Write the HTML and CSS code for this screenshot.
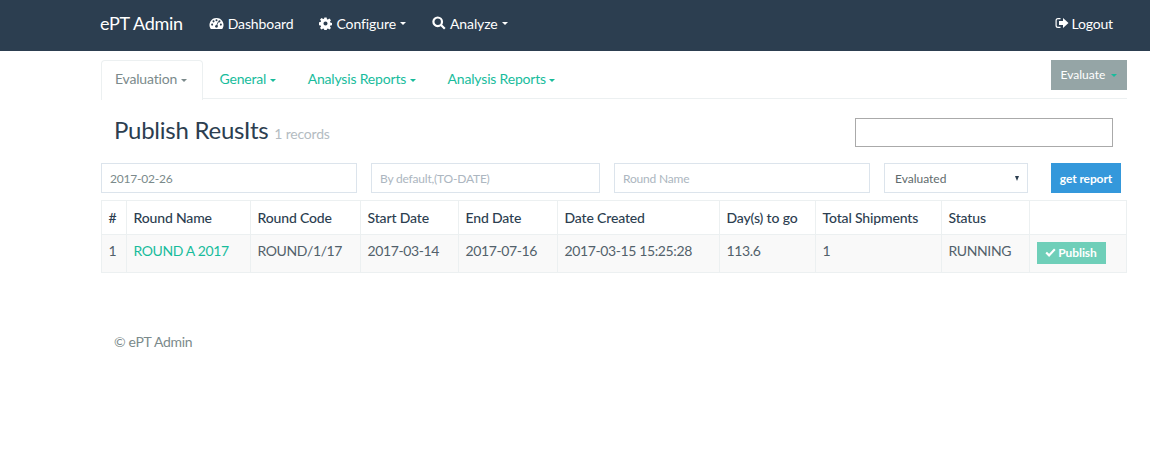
FILE: index.html
```html
<!DOCTYPE html>
<html lang="en">
<head>
    <meta charset="UTF-8">
    <meta name="viewport" content="width=device-width, initial-scale=1.0">
    <title>Publish Results</title>
    <link rel="stylesheet" href="styles.css">
</head>
<body>

    <!-- Top navigation -->
    <nav class="navbar">
        <a class="brand">ePT Admin</a>
        <a class="nav-link">
            <svg class="icon" viewBox="0 0 16 14" width="15" height="13"><path fill="currentColor" fill-rule="evenodd" d="M8 1a7.5 7.5 0 0 0-6.5 11.3c.2.4.5.6.9.6h11.2c.4 0 .7-.2.9-.6A7.500 7.500 0 0 0 8 1zM3.300 9.300a1.100 1.100 0 1 1 0-2.200 1.100 1.100 0 0 1 0 2.200zm1.500-3.500a1.100 1.100 0 1 1 0-2.200 1.100 1.100 0 0 1 0 2.200zM8 4.700a1.100 1.100 0 1 1 0-2.200 1.100 1.100 0 0 1 0 2.200zm1.300 6a1.500 1.500 0 0 1-2.800-1c.2-.6.800-1 1.400-1l1.600-3.700c.1-.3.400-.4.700-.3.300.1.400.4.300.7L8.900 8.100c.5.600.7 1.800.4 2.600zm1.900-4.900a1.100 1.100 0 1 1 0-2.200 1.100 1.100 0 0 1 0 2.200zm1.500 3.500a1.100 1.100 0 1 1 0-2.200 1.100 1.100 0 0 1 0 2.200z"/></svg>
            Dashboard
        </a>
        <a class="nav-link">
            <svg class="icon" viewBox="0 0 14 14" width="13" height="13"><path fill="currentColor" fill-rule="evenodd" d="M5.800.5h2.400l.4 1.900 1 .4L11.200 1.700l1.700 1.700-1.100 1.600.4 1 1.900.4v2.400l-1.900.4-.4 1 1.100 1.600-1.700 1.700-1.600-1.100-1 .4-.4 1.900H5.800l-.4-1.900-1-.4-1.600 1.100-1.700-1.700 1.100-1.600-.4-1-1.900-.4V5.800l1.900-.4.400-1-1.100-1.600 1.700-1.700 1.600 1.100 1-.4zM7 4.800a2.200 2.200 0 1 0 0 4.400 2.200 2.200 0 0 0 0-4.400z"/></svg>
            Configure <span class="caret"></span>
        </a>
        <a class="nav-link">
            <svg class="icon" viewBox="0 0 14 14" width="14" height="14"><path fill="none" stroke="currentColor" stroke-width="2.200" d="M9.300 9.300l3.500 3.500M10 5.800a4.300 4.300 0 1 1-8.600 0 4.300 4.300 0 0 1 8.600 0z"/></svg>
            Analyze <span class="caret"></span>
        </a>
        <a class="nav-link logout">
            <svg class="icon" viewBox="0 0 14 12" width="14" height="12"><path fill="currentColor" d="M5.500 1H3a2.500 2.500 0 0 0-2.500 2.500v5A2.500 2.500 0 0 0 3 11h2.500V9.800H3a1.300 1.300 0 0 1-1.300-1.300v-5A1.300 1.300 0 0 1 3 2.200h2.500z"/><path fill="currentColor" d="M8 1l5.500 5L8 11V8H4V4h4z"/></svg>
            Logout
        </a>
    </nav>

    <div class="container">
        <!-- Tabs -->
        <div class="tabs">
            <a class="tab active">Evaluation <span class="caret"></span></a>
            <a class="tab">General <span class="caret"></span></a>
            <a class="tab">Analysis Reports <span class="caret"></span></a>
            <a class="tab">Analysis Reports <span class="caret"></span></a>
            <button class="btn-evaluate">Evaluate <span class="caret"></span></button>
        </div>

        <div class="title-row">
            <h1>Publish ReusIts <small>1 records</small></h1>
            <input type="text" class="search">
        </div>

        <!-- Filters -->
        <div class="filters">
            <input type="text" class="field field-from" value="2017-02-26">
            <input type="text" class="field field-to" placeholder="By default,(TO-DATE)">
            <input type="text" class="field field-from" placeholder="Round Name">
            <div class="field field-select">Evaluated <span class="select-arrow"></span></div>
            <button class="btn-report">get report</button>
        </div>

        <table>
            <thead>
                <tr>
                    <th class="c-num">#</th>
                    <th class="c-name">Round Name</th>
                    <th class="c-code">Round Code</th>
                    <th class="c-start">Start Date</th>
                    <th class="c-end">End Date</th>
                    <th class="c-created">Date Created</th>
                    <th class="c-days">Day(s) to go</th>
                    <th class="c-total">Total Shipments</th>
                    <th class="c-status">Status</th>
                    <th></th>
                </tr>
            </thead>
            <tbody>
                <tr>
                    <td>1</td>
                    <td><a class="round-link">ROUND A 2017</a></td>
                    <td>ROUND/1/17</td>
                    <td>2017-03-14</td>
                    <td>2017-07-16</td>
                    <td>2017-03-15 15:25:28</td>
                    <td>113.6</td>
                    <td>1</td>
                    <td>RUNNING</td>
                    <td>
                        <button class="btn-publish">
                            <svg viewBox="0 0 12 10" width="11" height="9"><path fill="none" stroke="currentColor" stroke-width="2.400" d="M1.200 5l3.200 3.200L10.800 1.500"/></svg>
                            Publish
                        </button>
                    </td>
                </tr>
            </tbody>
        </table>

        <footer>&copy; ePT Admin</footer>
    </div>

</body>
</html>
```

FILE: styles.css
```css
body {
    margin: 0;
    font-family: "Lato", "Liberation Sans", sans-serif;
    font-size: 14px;
    color: #2c3e50;
    background-color: #fff;
}

.navbar {
    display: flex;
    align-items: center;
    box-sizing: border-box;
    height: 51px;
    padding: 0 37px 5px 100px;
    background-color: #2c3e50;
    color: #fff;
}

.brand {
    font-size: 18px;
    letter-spacing: -0.3px;
    margin-right: 26px;
}

.nav-link {
    display: flex;
    align-items: center;
    gap: 4px;
    margin-right: 26px;
    font-size: 14px;
    letter-spacing: -0.1px;
}

.logout {
    margin-left: auto;
    margin-right: 0;
    gap: 2px;
    letter-spacing: -0.15px;
}

.caret {
    display: inline-block;
    width: 0;
    height: 0;
    vertical-align: middle;
    border-top: 3px solid;
    border-left: 3px solid transparent;
    border-right: 3px solid transparent;
}

.container {
    margin-left: 101px;
    width: 1026px;
}

.tabs {
    display: flex;
    align-items: flex-start;
    height: 38px;
    margin-top: 9px;
    border-bottom: 1px solid #ecf0f1;
}

.tab {
    height: 38px;
    line-height: 36px;
    padding: 0 14px;
    margin-right: 2px;
    font-size: 14px;
    letter-spacing: -0.18px;
    color: #18bc9c;
    border: 1px solid transparent;
    border-bottom: 0;
    border-radius: 4px 4px 0 0;
}

.tab.active {
    padding: 0 15px 0 13px;
    color: #7b8a8b;
    background-color: #fff;
    border-color: #ecf0f1;
    height: 39px;
}

.btn-evaluate {
    margin-left: auto;
    width: 76px;
    height: 30px;
    padding: 0 0 2px;
    font-family: inherit;
    font-size: 12px;
    font-weight: 400;
    color: #fff;
    background-color: #95a5a6;
    border: 0;
}

.btn-evaluate .caret {
    color: #18bc9c;
    margin-left: 3px;
}

.title-row {
    display: flex;
    justify-content: space-between;
    align-items: flex-start;
    padding: 15px 14px 0 13px;
    height: 49px;
}

h1 {
    margin: 0;
    font-size: 24px;
    font-weight: 400;
    line-height: 32px;
    letter-spacing: -0.25px;
}

h1 small {
    font-size: 14px;
    letter-spacing: -0.2px;
    color: #b4bcc2;
}

.search {
    width: 258px;
    height: 29px;
    margin-top: 4px;
    box-sizing: border-box;
    border: 1px solid #aaa;
    background-color: #fff;
}

.filters {
    display: flex;
    align-items: flex-start;
    gap: 14px;
    height: 37px;
}

.field {
    height: 30px;
    box-sizing: border-box;
    padding: 0 8px;
    font-family: inherit;
    font-size: 12px;
    letter-spacing: -0.2px;
    color: #7b8a8b;
    border: 1px solid #dce4ec;
    background-color: #fff;
}

.field::placeholder {
    color: #acb6c0;
}

.field-from {
    width: 256px;
}

.field-to {
    width: 229px;
}

.field-select {
    display: flex;
    align-items: center;
    justify-content: space-between;
    width: 144px;
    padding: 0 8px 0 10px;
    letter-spacing: 0;
    color: #5f6b6d;
}

.select-arrow {
    width: 0;
    height: 0;
    border-top: 5px solid #2c3e50;
    border-left: 2.500px solid transparent;
    border-right: 2.500px solid transparent;
}

.btn-report {
    margin-left: 9px;
    width: 70px;
    height: 30px;
    padding: 0;
    font-family: inherit;
    font-size: 12px;
    font-weight: 700;
    letter-spacing: -0.1px;
    color: #fff;
    background-color: #3498db;
    border: 0;
}

table {
    width: 1026px;
    table-layout: fixed;
    border-collapse: collapse;
    font-size: 14px;
}

th, td {
    box-sizing: border-box;
    text-align: left;
    border: 1px solid #ecf0f1;
    white-space: nowrap;
}

th {
    height: 34px;
    padding: 0 7px 0 6.500px;
    font-weight: 500;
    letter-spacing: -0.15px;
    color: #2c3e50;
}

td {
    height: 38px;
    padding: 0 7px 6px 6.500px;
    letter-spacing: -0.38px;
    color: #52616b;
    background-color: #f9f9f9;
}

.c-num { width: 25px; }
.c-name { width: 124px; }
.c-code { width: 110px; }
.c-start { width: 98px; }
.c-end { width: 99px; }
.c-created { width: 162px; }
.c-days { width: 96px; }
.c-total { width: 126px; }
.c-status { width: 88px; }

.round-link {
    color: #18bc9c;
}

.btn-publish {
    display: flex;
    align-items: center;
    justify-content: center;
    gap: 2px;
    width: 69px;
    height: 22px;
    margin-top: 4px;
    padding: 0;
    font-family: inherit;
    font-size: 12px;
    font-weight: 700;
    letter-spacing: -0.1px;
    color: #fff;
    background-color: #6fcfb9;
    border: 0;
}

footer {
    margin-top: 60px;
    padding-left: 13px;
    font-size: 14px;
    letter-spacing: -0.3px;
    color: #7b8a8b;
}
```
